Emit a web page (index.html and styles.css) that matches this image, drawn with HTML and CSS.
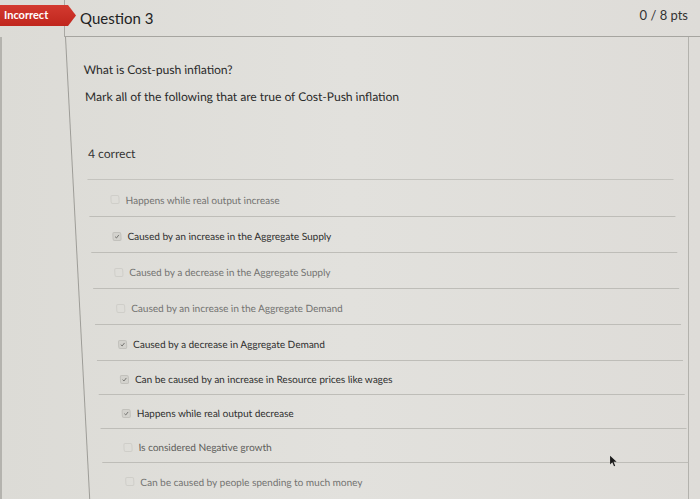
FILE: index.html
```html
<!DOCTYPE html>
<html lang="en">
<head>
<meta charset="utf-8">
<title>Question 3</title>
<link rel="stylesheet" href="styles.css">
</head>
<body>
<div class="page">
  <header class="header">
    <div class="header-side"></div>
    <div class="header-main">
      <h2 class="q-title">Question 3</h2>
      <span class="q-points">0 / 8 pts</span>
    </div>
    <div class="badge">Incorrect</div>
  </header>
  <div class="body">
    <div class="side"></div>
    <main class="content">
      <p class="q-text">What is Cost-push inflation?</p>
      <p class="q-text">Mark all of the following that are true of Cost-Push inflation</p>
      <p class="q-count">4 correct</p>
      <ul class="answers">
        <li class="row"><span class="box"></span><span class="label">Happens while real output increase</span></li>
        <li class="row checked"><span class="box"><svg viewBox="0 0 10 10"><path d="M2.3 5.2 L4.2 7.1 L7.8 2.8"/></svg></span><span class="label">Caused by an increase in the Aggregate Supply</span></li>
        <li class="row"><span class="box"></span><span class="label">Caused by a decrease in the Aggregate Supply</span></li>
        <li class="row"><span class="box"></span><span class="label">Caused by an increase in the Aggregate Demand</span></li>
        <li class="row checked"><span class="box"><svg viewBox="0 0 10 10"><path d="M2.3 5.2 L4.2 7.1 L7.8 2.8"/></svg></span><span class="label">Caused by a decrease in Aggregate Demand</span></li>
        <li class="row checked"><span class="box"><svg viewBox="0 0 10 10"><path d="M2.3 5.2 L4.2 7.1 L7.8 2.8"/></svg></span><span class="label">Can be caused by an increase in Resource prices like wages</span></li>
        <li class="row checked"><span class="box"><svg viewBox="0 0 10 10"><path d="M2.3 5.2 L4.2 7.1 L7.8 2.8"/></svg></span><span class="label">Happens while real output decrease</span></li>
        <li class="row mid"><span class="box"></span><span class="label">Is considered Negative growth</span></li>
        <li class="row"><span class="box"></span><span class="label">Can be caused by people spending to much money</span></li>
      </ul>
    </main>
    <div class="side-right"></div>
  </div>
  <svg class="cursor" viewBox="0 0 10 14"><path d="M1 1 L1 11 L3.6 8.6 L5.6 13 L7 12.4 L5 8 L8.6 8 Z"/></svg>
</div>
</body>
</html>
```

FILE: styles.css
```css
* { box-sizing: border-box; }
html, body {
  margin: 0;
  padding: 0;
  height: 100%;
  overflow: hidden;
}
body {
  background: #dddcd7;
  font-family: Lato, "Open Sans", sans-serif;
  color: #2f2f2f;
}
.page {
  position: relative;
  width: 700px;
  height: 499px;
  display: flex;
  flex-direction: column;
  background: linear-gradient(90deg, #dcdbd6 0%, #e2e1dd 50%, #dedcd8 100%);
}
.header {
  display: flex;
  height: 37px;
  flex: none;
}
.header-side {
  width: 65px;
  border-right: 1px solid #a9a8a3;
}
.header-main {
  flex: 1;
  display: flex;
  align-items: flex-start;
  justify-content: space-between;
  border-bottom: 1px solid #a6a5a0;
  padding: 8px 12px 0 15px;
}
.q-title {
  margin: 0;
  font-size: 15px;
  font-weight: 400;
  color: #222;
  line-height: 20px;
}
.q-points {
  font-size: 13px;
  color: #333;
  line-height: 16px;
  margin-top: -1px;
}
.badge {
  position: absolute;
  left: 0;
  top: 5px;
  width: 76px;
  height: 21px;
  padding-left: 4px;
  font-size: 11px;
  font-weight: 700;
  color: #fff;
  line-height: 20px;
  background: linear-gradient(180deg, #d33a30 0%, #c0261d 100%);
  clip-path: polygon(0 0, 68px 0, 100% 50%, 68px 100%, 0 100%);
}
.body {
  flex: 1;
  display: flex;
  min-height: 0;
}
.side {
  width: 65px;
  flex: none;
  border-left: 2px solid #b4b3ae;
}
.side-right {
  width: 12px;
  flex: none;
  border-left: 1px solid #b3b2ad;
}
.content {
  flex: 1;
  border-left: 1px solid #9e9d98;
  transform: skewX(3deg);
  transform-origin: 0 0;
  padding: 25px 0 0 16px;
}
.q-text {
  margin: 0 0 11px;
  font-size: 12px;
  line-height: 16px;
  color: #2a2a2a;
}
.q-count {
  margin: 41px 0 0;
  font-size: 12px;
  line-height: 16px;
  color: #333;
}
.answers {
  list-style: none;
  margin: 17px 22px 0 -2px;
  padding: 0;
  border-top: 1px solid #c4c3be;
}
.row {
  display: flex;
  align-items: center;
  height: 36px;
  padding: 3px 0 0 22px;
  border-bottom: 1px solid #bebdb8;
  font-size: 10px;
  color: #737371;
}
.row:first-child { height: 37px; }
.row:nth-child(n+6) { height: 34px; }
.row:last-child { border-bottom: none; }
.row.checked { color: #2e2e2e; }
.row.mid { color: #5d5d5a; }
.box {
  width: 9px;
  height: 9px;
  border: 1px solid #cfcec9;
  border-radius: 2px;
  margin-right: 6px;
  flex: none;
  display: flex;
}
.row.checked .box {
  background: #d3d2cd;
  border-color: #c2c1bc;
}
.box svg {
  width: 100%;
  height: 100%;
  fill: none;
  stroke: #6c6c69;
  stroke-width: 1.3;
}
.cursor {
  position: absolute;
  left: 609px;
  top: 455px;
  width: 9px;
  height: 12px;
  fill: #1a1a1a;
}
```
